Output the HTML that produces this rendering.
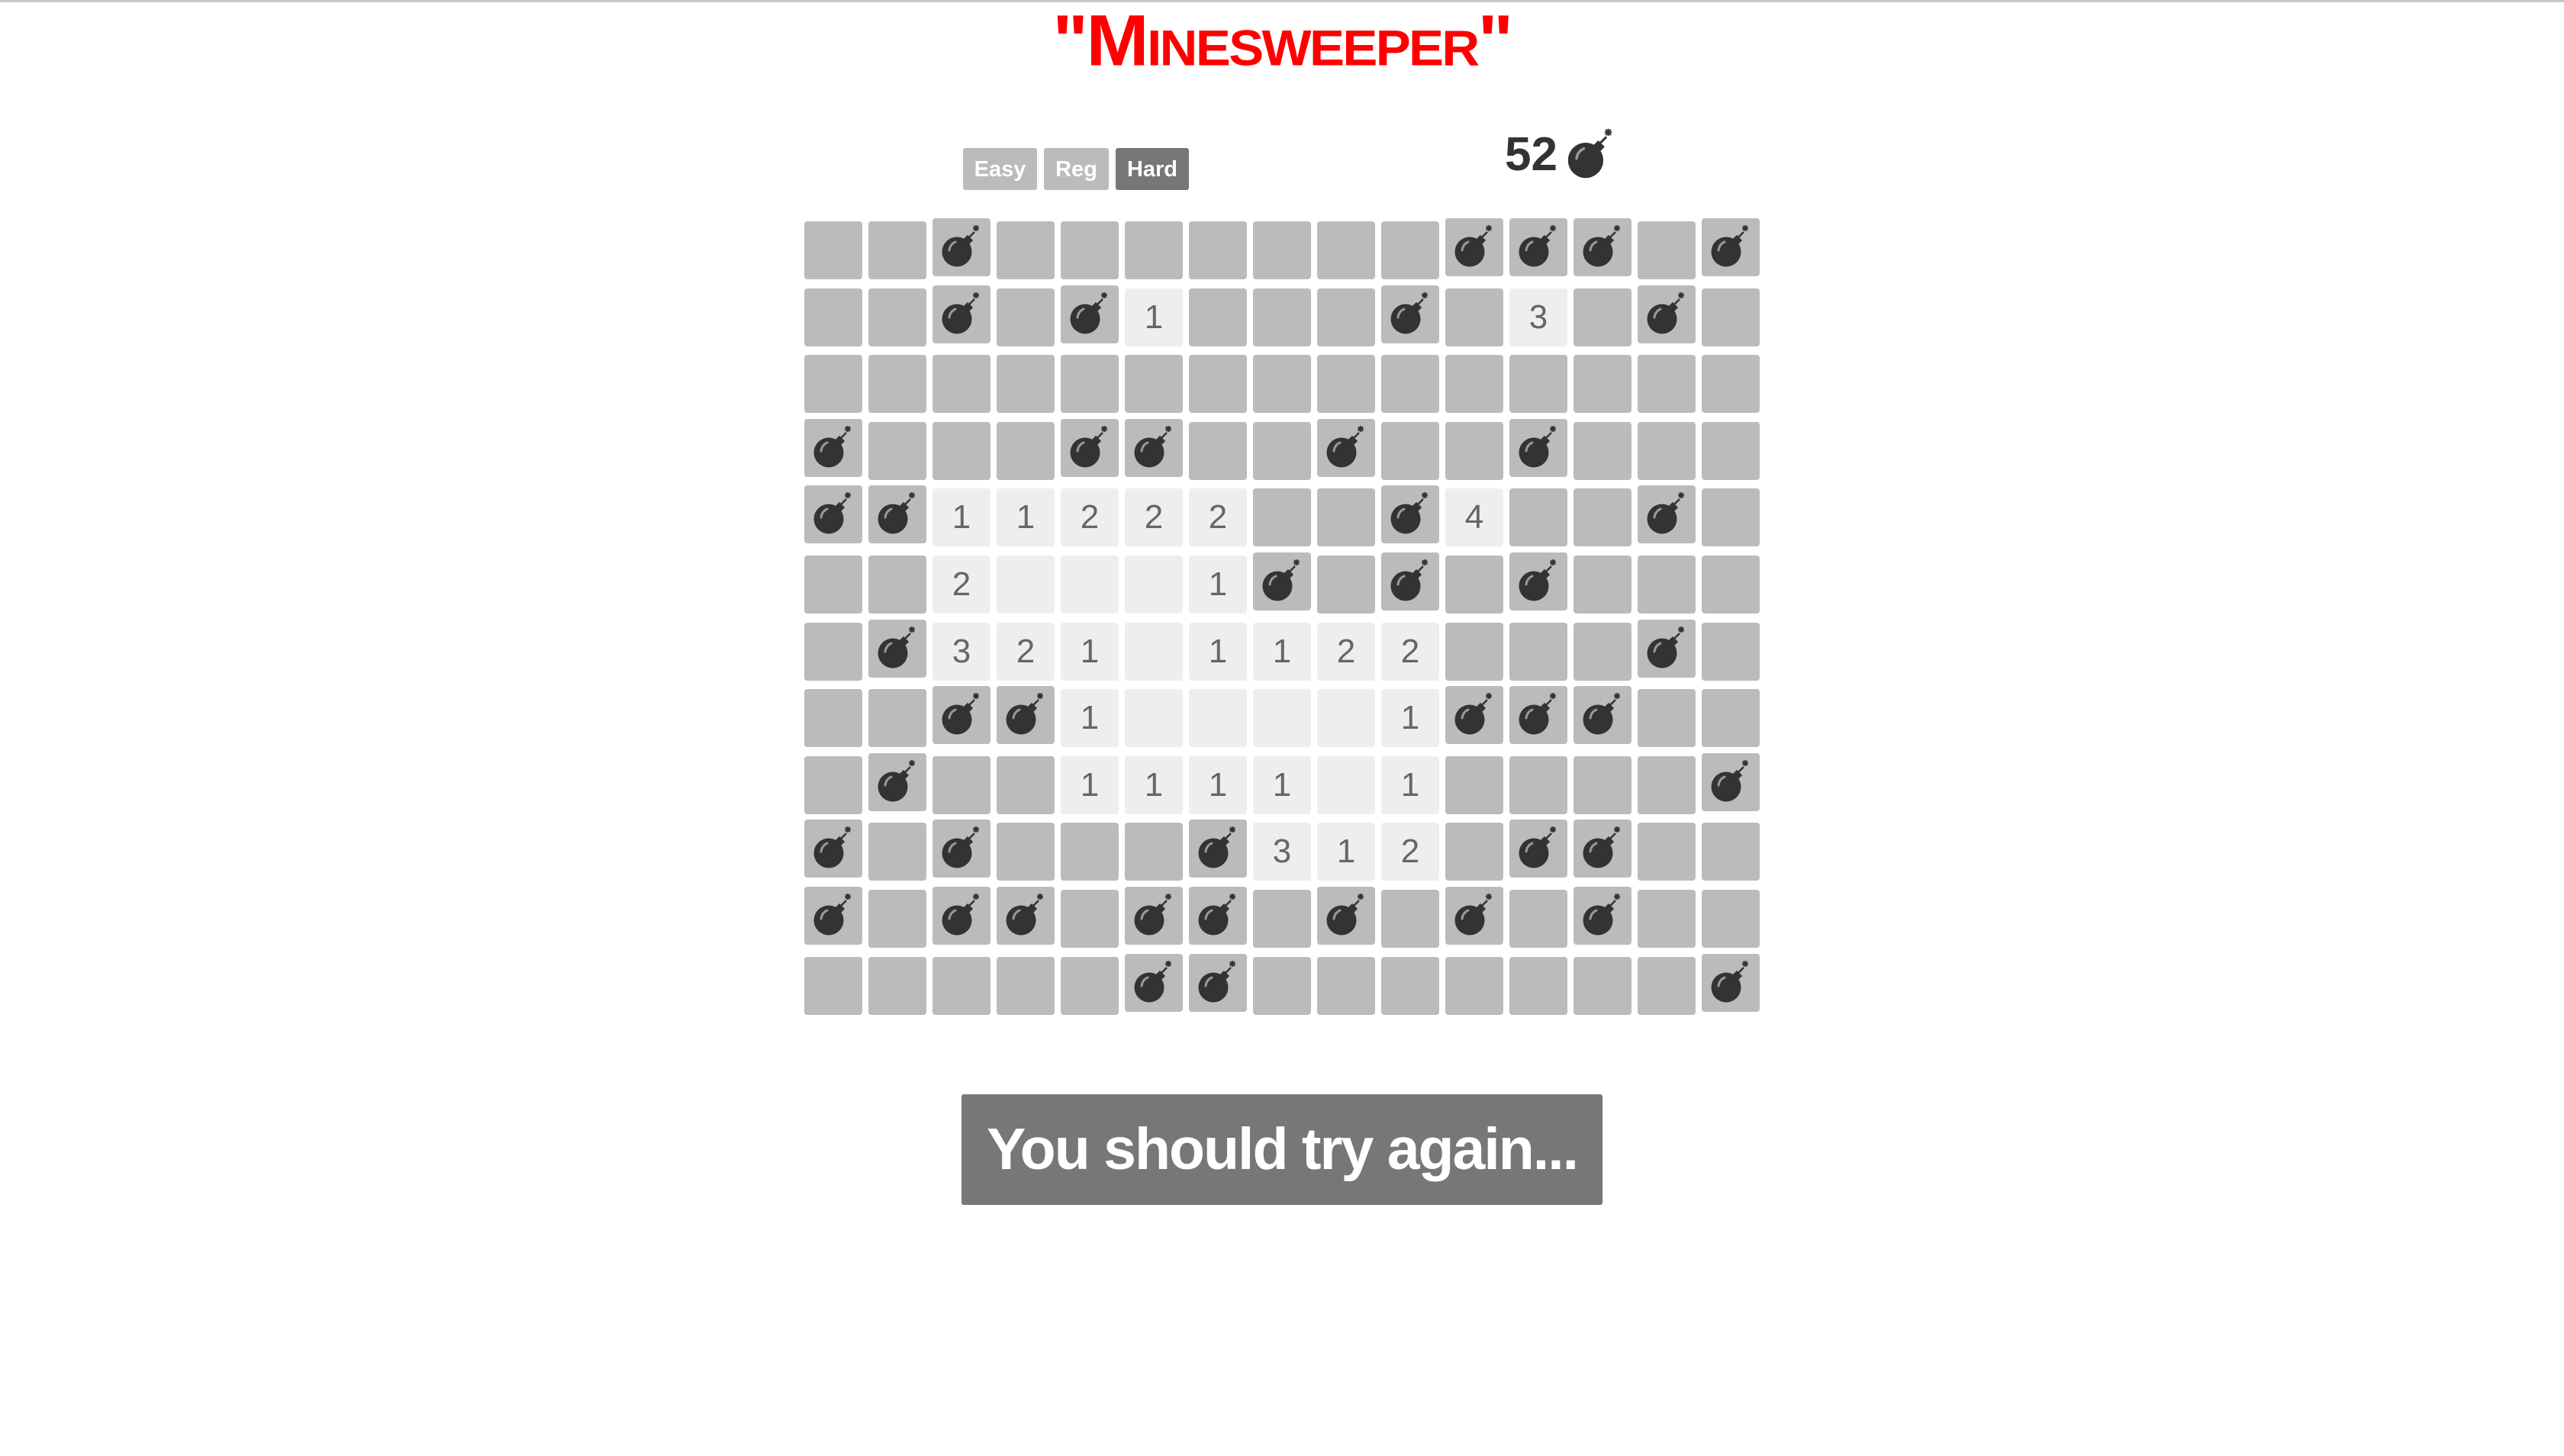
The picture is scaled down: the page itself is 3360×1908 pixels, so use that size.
<!DOCTYPE html>
<html><head><meta charset="utf-8">
<style>
html,body{margin:0;padding:0;background:#fff;width:3360px;height:1908px;overflow:hidden;font-family:"Liberation Sans",sans-serif}
#top{position:absolute;left:0;top:0;width:3360px;height:3px;background:#c8c8c8}
#title{position:absolute;left:1370px;top:4px;width:620px;text-align:center;color:#ff0000;font-weight:bold;font-size:76px;line-height:80px;transform:scale(1.3,1.25);transform-origin:50% 0;letter-spacing:-2px;font-variant:small-caps}
.btn{position:absolute;top:194px;height:55px;border-radius:3px;background:#bbb;color:#fff;font-weight:bold;font-size:29px;line-height:57px;text-align:center}
#count{position:absolute;left:1972px;top:166px;font-size:62px;font-weight:bold;color:#333;line-height:74px}
.c{position:absolute;width:76px;height:76px;border-radius:4px;background:#bbb}
.r{background:#eee;color:#666;font-size:44px;line-height:76px;text-align:center}
#msg{position:absolute;left:1260px;top:1434px;width:840px;height:145px;background:#777;border-radius:3px;color:#fff;font-weight:bold;font-size:77px;line-height:145px;text-align:center;letter-spacing:-2px}
</style></head><body>
<div id="top"></div>
<div id="title">"Minesweeper"</div>
<div class="btn" style="left:1262px;width:97px">Easy</div>
<div class="btn" style="left:1368px;width:85px">Reg</div>
<div class="btn" style="left:1462px;width:96px;background:#777">Hard</div>
<div id="count">52</div>
<svg style="position:absolute;left:2040px;top:158px" width="90" height="90" viewBox="0 0 76 76">
<g id="bombsym"><circle cx="32" cy="44" r="19.5" fill="#333"/><rect x="41" y="24" width="10" height="10" fill="#333" transform="rotate(45 46 29)"/><path d="M47 26 L55 18" stroke="#333" stroke-width="2.5" fill="none"/><path d="M57 9v8M53 13h8M54 10l6 6M60 10l-6 6" stroke="#333" stroke-width="1.8"/><path d="M22 42 q1 -8 8 -11" stroke="#999" stroke-width="3" fill="none" stroke-linecap="round"/></g>
</svg>
<div id="grid"></div>
<div id="msg">You should try again...</div>
<script>
var rows=[
"##B#######BBB#B",
"##B#B1###B#3#B#",
"###############",
"B###BB##B##B###",
"BB11222##B4##B#",
"##2...1B#B#B###",
"#B321.1122###B#",
"##BB1....1BBB##",
"#B##1111.1####B",
"B#B###B312#BB##",
"B#BB#BB#B#B#B##",
"#####BB#######B"];
var h="",sym=document.getElementById('bombsym').outerHTML.replace('id="bombsym"','');
for(var y=0;y<12;y++)for(var x=0;x<15;x++){
var ch=rows[y][x],l=1054+x*84,t=Math.round(290+y*87.6);
if(ch=='#')h+='<div class="c" style="left:'+l+'px;top:'+t+'px"></div>';
else if(ch=='B')h+='<div class="c" style="left:'+l+'px;top:'+(t-4)+'px"><svg width="76" height="76" viewBox="0 0 76 76">'+sym+'</svg></div>';
else h+='<div class="c r" style="left:'+l+'px;top:'+t+'px">'+(ch=='.'?'':ch)+'</div>';
}
document.getElementById('grid').innerHTML=h;
</script>
</body></html>
